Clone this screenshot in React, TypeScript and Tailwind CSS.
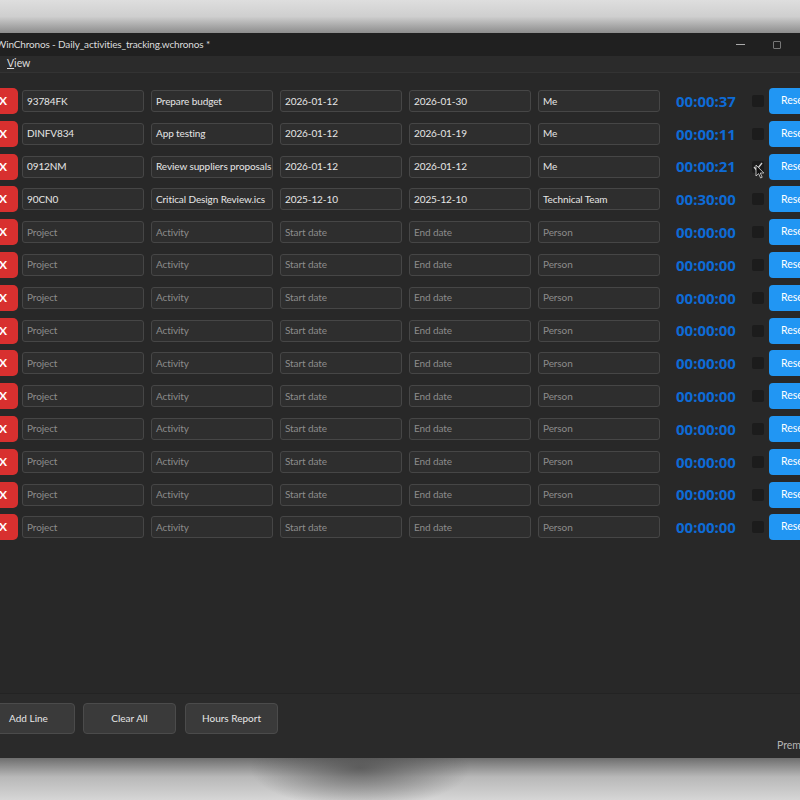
import React from "react";

type Row = {
  project?: string;
  activity?: string;
  start?: string;
  end?: string;
  person?: string;
  time: string;
  checked?: boolean;
};

const filled: Row[] = [
  { project: "93784FK", activity: "Prepare budget", start: "2026-01-12", end: "2026-01-30", person: "Me", time: "00:00:37" },
  { project: "DINFV834", activity: "App testing", start: "2026-01-12", end: "2026-01-19", person: "Me", time: "00:00:11" },
  { project: "0912NM", activity: "Review suppliers proposals", start: "2026-01-12", end: "2026-01-12", person: "Me", time: "00:00:21", checked: true },
  { project: "90CN0", activity: "Critical Design Review.ics", start: "2025-12-10", end: "2025-12-10", person: "Technical Team", time: "00:30:00" },
];

const rows: Row[] = [...filled, ...Array.from({ length: 10 }, () => ({ time: "00:00:00" }))];

function Field({ value, placeholder }: { value?: string; placeholder: string }) {
  return (
    <div className="flex h-[22px] w-[122px] shrink-0 items-center overflow-hidden whitespace-nowrap rounded-[3px] border border-[#464646] bg-[#2e2e2e] px-[4px] text-[10px] tracking-[-0.1px]">
      {value ? <span className="text-[#e6e6e6]">{value}</span> : <span className="text-[#8c8c8c]">{placeholder}</span>}
    </div>
  );
}

function Cursor() {
  return (
    <svg className="absolute left-[3px] top-[3px]" width="10" height="15" viewBox="0 0 10 15">
      <path d="M1 1 L1 12 L3.6 9.6 L5.6 14 L7.2 13.3 L5.3 9 L8.8 9 Z" fill="#111" stroke="#ddd" strokeWidth="0.8" />
    </svg>
  );
}

function TimerRow({ row }: { row: Row }) {
  return (
    <div className="flex h-[26px] items-center">
      <button className="ml-[-15px] flex h-[26px] w-[33px] shrink-0 items-center justify-end rounded-[5px] bg-[#d8302f] pr-[11px] text-[12px] font-bold text-white">
        X
      </button>
      <div className="ml-[4px] flex gap-[7px]">
        <Field value={row.project} placeholder="Project" />
        <Field value={row.activity} placeholder="Activity" />
        <Field value={row.start} placeholder="Start date" />
        <Field value={row.end} placeholder="End date" />
        <Field value={row.person} placeholder="Person" />
      </div>
      <div
        className="w-[92px] shrink-0 text-center text-[15px] font-bold text-[#0e6bd6]"
        style={{ fontFamily: '"Noto Sans", sans-serif' }}
      >
        {row.time}
      </div>
      <div className="relative h-[12px] w-[12px] shrink-0 rounded-[2px] bg-[#1c1c1c]">
        {row.checked && (
          <>
            <svg className="absolute left-0 top-0" width="12" height="12" viewBox="0 0 12 12">
              <path d="M2 6 L4.5 9 L10 2" fill="none" stroke="#cfcfcf" strokeWidth="1.3" />
            </svg>
            <Cursor />
          </>
        )}
      </div>
      <button className="ml-[5px] flex h-[26px] w-[70px] shrink-0 items-center rounded-[4px] bg-[#2196f3] pl-[12px] text-[10.5px] text-white">
        Reset
      </button>
    </div>
  );
}

export default function App() {
  return (
    <div
      className="flex h-[800px] w-[800px] flex-col overflow-hidden bg-[#cfcfcf]"
      style={{ fontFamily: 'Lato, "Noto Sans", sans-serif' }}
    >
      <div className="h-[33px] shrink-0 bg-gradient-to-b from-[#dedede] via-[#cfcfcf] to-[#8d8d8d]" />

      <div className="ml-[-18px] flex h-[725px] w-[860px] shrink-0 flex-col bg-[#282828]">
        {/* title bar */}
        <div className="flex h-[23px] shrink-0 items-center bg-[#202020] pl-[14px] text-[10px] tracking-[-0.15px] text-[#dcdcdc]">
          <span>WinChronos - Daily_activities_tracking.wchronos *</span>
          <div className="ml-auto mr-[61px] flex items-center gap-[28px]">
            <div className="h-px w-[9px] bg-[#aaa]" />
            <div className="h-[8px] w-[8px] rounded-[1px] border border-[#777]" />
          </div>
        </div>
        {/* menu */}
        <div className="flex h-[17px] shrink-0 items-center border-b border-[#333] bg-[#2b2b2b] pl-[25px] text-[10.5px] text-[#dcdcdc]">
          <span>
            <span className="underline">V</span>iew
          </span>
        </div>

        <div className="flex flex-1 flex-col gap-[6.8px] pl-[18px] pt-[15px]">
          {rows.map((r, i) => (
            <TimerRow key={i} row={r} />
          ))}
        </div>

        {/* footer */}
        <div className="h-[65px] shrink-0 border-t border-[#232323] bg-[#2a2a2a]">
          <div className="flex gap-[8px] pt-[9px]">
            <button className="h-[31px] w-[93px] rounded-[4px] border border-[#4b4b4b] bg-[#3a3a3a] text-[10px] text-[#e6e6e6]">Add Line</button>
            <button className="h-[31px] w-[93px] rounded-[4px] border border-[#4b4b4b] bg-[#3a3a3a] text-[10px] text-[#e6e6e6]">Clear All</button>
            <button className="ml-[1px] h-[31px] w-[93px] rounded-[4px] border border-[#4b4b4b] bg-[#3a3a3a] text-[10px] text-[#e6e6e6]">Hours Report</button>
          </div>
          <div className="mt-[4px] whitespace-nowrap pl-[795px] text-[10.5px] leading-[14px] text-[#b4b4b4]">Premium</div>
        </div>
      </div>

      <div
        className="flex-1"
        style={{
          background:
            "radial-gradient(ellipse 110px 40px at 360px 10px, rgba(70,70,70,0.7), rgba(70,70,70,0) 100%), linear-gradient(#6e6e6e, #b8b8b8 45%, #d6d6d6)",
        }}
      />
    </div>
  );
}
